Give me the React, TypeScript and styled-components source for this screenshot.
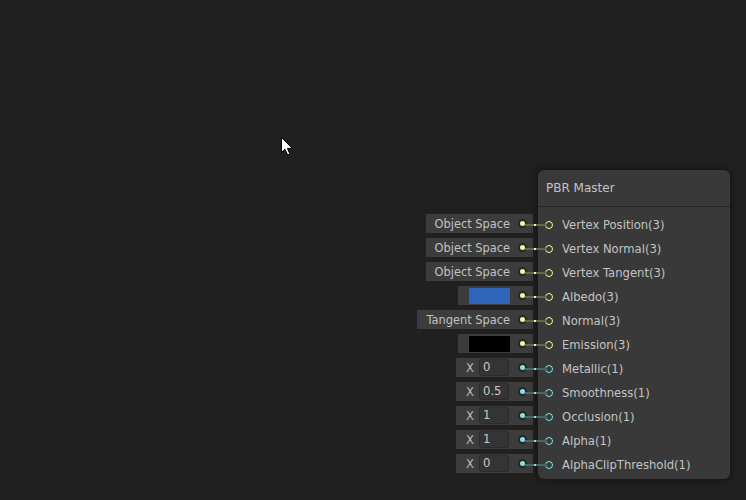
import React, { FC } from 'react';
import styled, { createGlobalStyle } from 'styled-components';

type PortKind = 'vec3' | 'float';

type Slot =
  | { kind: 'space'; label: string }
  | { kind: 'color'; color: string }
  | { kind: 'float'; value: string };

type Port = {
  name: string;
  type: PortKind;
  slot: Slot;
};

const PORTS: Port[] = [
  { name: 'Vertex Position(3)', type: 'vec3', slot: { kind: 'space', label: 'Object Space' } },
  { name: 'Vertex Normal(3)', type: 'vec3', slot: { kind: 'space', label: 'Object Space' } },
  { name: 'Vertex Tangent(3)', type: 'vec3', slot: { kind: 'space', label: 'Object Space' } },
  { name: 'Albedo(3)', type: 'vec3', slot: { kind: 'color', color: '#2f65b9' } },
  { name: 'Normal(3)', type: 'vec3', slot: { kind: 'space', label: 'Tangent Space' } },
  { name: 'Emission(3)', type: 'vec3', slot: { kind: 'color', color: '#000000' } },
  { name: 'Metallic(1)', type: 'float', slot: { kind: 'float', value: '0' } },
  { name: 'Smoothness(1)', type: 'float', slot: { kind: 'float', value: '0.5' } },
  { name: 'Occlusion(1)', type: 'float', slot: { kind: 'float', value: '1' } },
  { name: 'Alpha(1)', type: 'float', slot: { kind: 'float', value: '1' } },
  { name: 'AlphaClipThreshold(1)', type: 'float', slot: { kind: 'float', value: '0' } },
];

const PORT_COLORS: Record<PortKind, { bright: string; wire: string }> = {
  vec3: { bright: '#f4f89a', wire: '#66664a' },
  float: { bright: '#84e4e7', wire: '#4a6666' },
};

const GlobalStyle = createGlobalStyle`
  html, body {
    margin: 0;
    padding: 0;
    background: #202020;
  }
  body {
    font-family: "DejaVu Sans", "Noto Sans", sans-serif;
  }
`;

const SlotField: FC<{ slot: Slot; type: PortKind }> = ({ slot, type }) => {
  let content: React.ReactNode = null;
  if (slot.kind === 'space') content = <SpaceLabel>{slot.label}</SpaceLabel>;
  if (slot.kind === 'color') content = <Swatch $color={slot.color} />;
  if (slot.kind === 'float')
    content = (
      <>
        <AxisLabel>X</AxisLabel>
        <FloatInput>{slot.value}</FloatInput>
      </>
    );

  return (
    <Field $kind={slot.kind}>
      {content}
      <DotSlot $wide={slot.kind === 'float'}>
        <Dot $color={PORT_COLORS[type].bright} />
      </DotSlot>
    </Field>
  );
};

const Cursor: FC = () => (
  <CursorWrap>
    <svg width="13" height="19" viewBox="0 0 13 19">
      <path
        d="M0.5 0.5 L0.5 15.5 L4 12.2 L6.6 18 L8.9 17 L6.4 11.4 L11.3 11.4 Z"
        fill="#ffffff"
        stroke="#000000"
        strokeWidth="1"
        strokeLinejoin="round"
      />
    </svg>
  </CursorWrap>
);

const App: FC = () => (
  <>
    <GlobalStyle />
    <Canvas>
      <Graph>
        <Inputs>
          {PORTS.map((p) => (
            <SlotField key={p.name} slot={p.slot} type={p.type} />
          ))}
        </Inputs>
        <Node>
          <NodeHeader>PBR Master</NodeHeader>
          <NodeBody>
            {PORTS.map((p) => (
              <PortRow key={p.name}>
                <PortCircle
                  $color={PORT_COLORS[p.type].bright}
                  $wire={PORT_COLORS[p.type].wire}
                />
                <PortLabel>{p.name}</PortLabel>
              </PortRow>
            ))}
          </NodeBody>
        </Node>
      </Graph>
      <Cursor />
    </Canvas>
  </>
);

export default App;

const Canvas = styled.div`
  position: relative;
  width: 746px;
  height: 500px;
  overflow: hidden;
  background: #202020;
`;

const Graph = styled.div`
  position: absolute;
  right: 16px;
  top: 170px;
  display: flex;
  align-items: flex-start;
  gap: 5px;
`;

const Inputs = styled.div`
  display: flex;
  flex-direction: column;
  align-items: flex-end;
  gap: 5px;
  padding-top: 44px;
`;

const Field = styled.div<{ $kind: Slot['kind'] }>`
  height: 19px;
  display: flex;
  align-items: center;
  background: #3c3c3c;
  padding-left: ${({ $kind }) => ($kind === 'space' ? 9 : $kind === 'color' ? 11 : 10)}px;
`;

const SpaceLabel = styled.span`
  font-size: 11.4px;
  color: #c2c2c2;
  white-space: nowrap;
`;

const Swatch = styled.div<{ $color: string }>`
  width: 41px;
  height: 16px;
  background: ${({ $color }) => $color};
`;

const AxisLabel = styled.span`
  width: 13px;
  font-size: 11.6px;
  color: #b8b8b8;
`;

const FloatInput = styled.div`
  width: 30px;
  height: 17px;
  box-sizing: border-box;
  padding-left: 3px;
  border: 1px solid #2a2a2a;
  border-radius: 3px;
  background: #343434;
  font-size: 11.6px;
  line-height: 15px;
  color: #c8c8c8;
`;

const DotSlot = styled.div<{ $wide: boolean }>`
  width: ${({ $wide }) => ($wide ? 24 : 23)}px;
  box-sizing: border-box;
  padding-right: 8px;
  display: flex;
  justify-content: flex-end;
  align-items: center;
`;

const Dot = styled.div<{ $color: string }>`
  width: 5px;
  height: 5px;
  border-radius: 50%;
  background: ${({ $color }) => $color};
  box-shadow: 0 0 0 2px #262626;
`;

const Node = styled.div`
  width: 192px;
  box-sizing: border-box;
  background: #393939;
  border-radius: 6px;
  box-shadow: 0 0 6px 1px rgba(0, 0, 0, 0.45);
`;

const NodeHeader = styled.div`
  height: 36px;
  display: flex;
  align-items: center;
  padding-left: 8px;
  border-bottom: 1px solid #232323;
  font-size: 12px;
  color: #c4c4c4;
`;

const NodeBody = styled.div`
  padding: 6px 0 2px;
`;

const PortRow = styled.div`
  height: 24px;
  display: flex;
  align-items: center;
  padding-left: 7px;
  gap: 9px;
`;

const PortCircle = styled.div<{ $color: string; $wire: string }>`
  position: relative;
  width: 8px;
  height: 8px;
  box-sizing: border-box;
  border: 1.5px solid ${({ $color }) => $color};
  border-radius: 50%;

  &::before {
    content: '';
    position: absolute;
    right: 100%;
    top: 50%;
    width: 21px;
    height: 2px;
    margin-top: -1px;
    background: linear-gradient(
      to right,
      ${({ $wire }) => $wire} 0 9px,
      ${({ $color }) => $color} 9px 11px,
      ${({ $wire }) => $wire} 11px
    );
  }
`;

const PortLabel = styled.span`
  font-size: 11.6px;
  color: #c4c4c4;
  white-space: nowrap;
`;

const CursorWrap = styled.div`
  position: absolute;
  left: 281px;
  top: 137px;
  width: 13px;
  height: 19px;
`;
